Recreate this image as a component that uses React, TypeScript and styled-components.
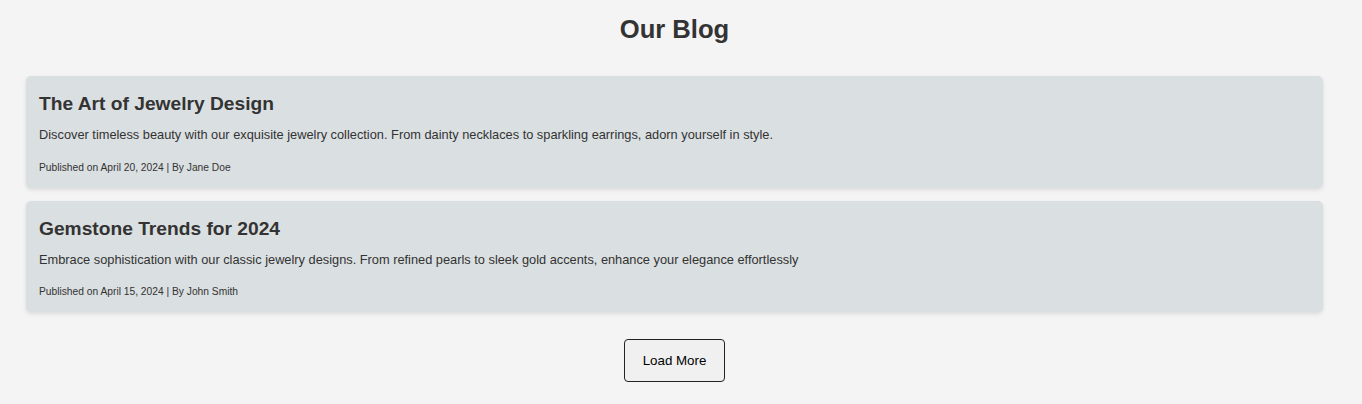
import React from "react";
import styled, { createGlobalStyle } from "styled-components";

const GlobalStyle = createGlobalStyle`
  html, body {
    margin: 0;
    padding: 0;
    background: #f4f4f4;
    font-family: "Liberation Sans", Arial, sans-serif;
    color: #333;
  }
`;

const Page = styled.main`
  padding: 0 39px 0 26px;
  display: flex;
  flex-direction: column;
`;

const Heading = styled.h2`
  margin: 15px 0 32px;
  text-align: center;
  font-size: 25.6px;
  font-weight: bold;
  color: #333;
`;

const PostList = styled.section`
  display: flex;
  flex-direction: column;
  gap: 13px;
`;

const Card = styled.article`
  background: #dadfe1;
  border-radius: 5px;
  padding: 17px 13px 15px;
  box-shadow: 0 2px 4px rgba(0, 0, 0, 0.1);
`;

const PostTitle = styled.h3`
  margin: 0 0 12px;
  font-size: 19.2px;
  font-weight: bold;
  color: #333;
`;

const Excerpt = styled.p`
  margin: 0 0 18px;
  font-size: 12.8px;
  line-height: 1.3;
  color: #333;
`;

const Meta = styled.p`
  margin: 0;
  font-size: 10.24px;
  color: #333;
`;

const Actions = styled.div`
  display: flex;
  justify-content: center;
  margin-top: 27px;
`;

const LoadButton = styled.button`
  width: 101px;
  height: 43px;
  background: #f0f0f0;
  border: 1px solid #222;
  border-radius: 4px;
  font-family: "Liberation Sans", Arial, sans-serif;
  font-size: 13.33px;
  color: #000;
  cursor: pointer;
`;

const posts = [
  {
    title: "The Art of Jewelry Design",
    excerpt:
      "Discover timeless beauty with our exquisite jewelry collection. From dainty necklaces to sparkling earrings, adorn yourself in style.",
    date: "April 20, 2024",
    author: "Jane Doe",
  },
  {
    title: "Gemstone Trends for 2024",
    excerpt:
      "Embrace sophistication with our classic jewelry designs. From refined pearls to sleek gold accents, enhance your elegance effortlessly",
    date: "April 15, 2024",
    author: "John Smith",
  },
];

export default function App() {
  return (
    <>
      <GlobalStyle />
      <Page>
        <Heading>Our Blog</Heading>
        <PostList>
          {posts.map((p) => (
            <Card key={p.title}>
              <PostTitle>{p.title}</PostTitle>
              <Excerpt>{p.excerpt}</Excerpt>
              <Meta>
                Published on {p.date} | By {p.author}
              </Meta>
            </Card>
          ))}
        </PostList>
        <Actions>
          <LoadButton>Load More</LoadButton>
        </Actions>
      </Page>
    </>
  );
}
